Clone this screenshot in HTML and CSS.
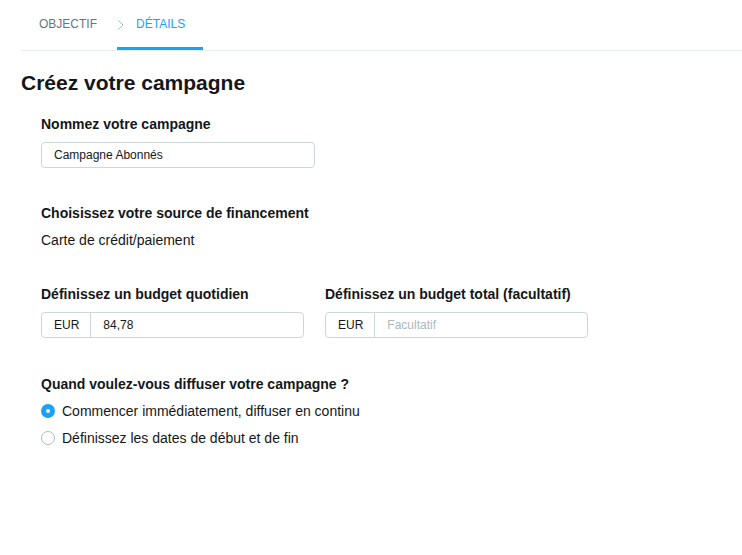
FILE: index.html
```html
<!DOCTYPE html>
<html lang="fr">
<head>
<meta charset="utf-8">
<title>Créez votre campagne</title>
<link rel="stylesheet" href="styles.css">
</head>
<body>
<nav class="tabs">
  <div class="tab">OBJECTIF</div>
  <div class="tab tab-active">
    <svg class="chevron" width="6" height="10" viewBox="0 0 6 10"><polyline points="0.5,0.5 5,5 0.5,9.5" fill="none" stroke="#aab8c2" stroke-width="1"/></svg>
    <span>DÉTAILS</span>
  </div>
</nav>
<main class="page">
  <h1 class="title">Créez votre campagne</h1>
  <div class="form">
    <section class="field">
      <div class="label">Nommez votre campagne</div>
      <div class="input input-name"><span>Campagne Abonnés</span></div>
    </section>
    <section class="field field-text">
      <div class="label">Choisissez votre source de financement</div>
      <div class="value">Carte de crédit/paiement</div>
    </section>
    <section class="field budgets">
      <div class="budget">
        <div class="label">Définissez un budget quotidien</div>
        <div class="input group">
          <span class="addon">EUR</span>
          <span class="group-text">84,78</span>
        </div>
      </div>
      <div class="budget">
        <div class="label">Définissez un budget total (facultatif)</div>
        <div class="input group">
          <span class="addon">EUR</span>
          <span class="group-text placeholder">Facultatif</span>
        </div>
      </div>
    </section>
    <section class="field field-last">
      <div class="label">Quand voulez-vous diffuser votre campagne ?</div>
      <div class="radios">
        <div class="radio-row"><span class="radio radio-on"></span><span>Commencer immédiatement, diffuser en continu</span></div>
        <div class="radio-row"><span class="radio"></span><span>Définissez les dates de début et de fin</span></div>
      </div>
    </section>
  </div>
</main>
</body>
</html>
```
FILE: styles.css
```css
* { box-sizing: border-box; }
html, body { margin: 0; padding: 0; background: #ffffff; }
body {
  font-family: "Liberation Sans", Arial, Helvetica, sans-serif;
  color: #14171a;
  width: 742px;
  height: 555px;
  overflow: hidden;
}
.tabs {
  display: flex;
  margin-left: 21px;
  height: 51px;
  border-bottom: 1px solid #e6ecf0;
}
.tab {
  display: flex;
  align-items: center;
  height: 50px;
  padding: 1px 20px 0 18px;
  border-bottom: 3px solid transparent;
  font-size: 12px;
  line-height: 14px;
  color: #657786;
}
.tab-active {
  padding: 1px 18px 0 1px;
  border-bottom-color: #1da1f2;
  color: #1da1f2;
}
.chevron { display: block; margin: 2px 12px 0 0; }
.page { padding-left: 21px; }
.title {
  margin: 20px 0 0;
  font-size: 21px;
  line-height: 24px;
  font-weight: bold;
}
.form { padding-left: 20px; padding-top: 21px; }
.field { margin-bottom: 37px; }
.field-text { margin-bottom: 38px; }
.label {
  font-size: 14px;
  line-height: 16px;
  font-weight: bold;
  margin-bottom: 10px;
}
.value {
  font-size: 14px;
  line-height: 16px;
  margin-top: 11px;
}
.input {
  display: flex;
  align-items: center;
  height: 26px;
  border: 1px solid #ccd6dd;
  border-radius: 4px;
  background: #fff;
  font-size: 12px;
  line-height: 14px;
}
.input-name { width: 274px; padding-left: 12px; }
.budgets {
  display: grid;
  grid-template-columns: 263px 263px;
  column-gap: 21px;
  margin-bottom: 38px;
}
.group { width: 263px; }
.addon {
  display: flex;
  align-items: center;
  height: 100%;
  padding: 0 11px 0 12px;
  border-right: 1px solid #ccd6dd;
}
.group-text { padding-left: 12px; }
.placeholder { color: #aab8c2; }
.radios { display: flex; flex-direction: column; gap: 11px; padding-top: 1px; }
.radio-row {
  display: flex;
  align-items: center;
  font-size: 14px;
  line-height: 16px;
}
.radio {
  width: 14px;
  height: 14px;
  border-radius: 50%;
  border: 1px solid #b0bbc4;
  background: #fff;
  margin-right: 7px;
  flex: none;
}
.radio-on {
  border: 5px solid #1da1f2;
  background: #fff;
}
```
